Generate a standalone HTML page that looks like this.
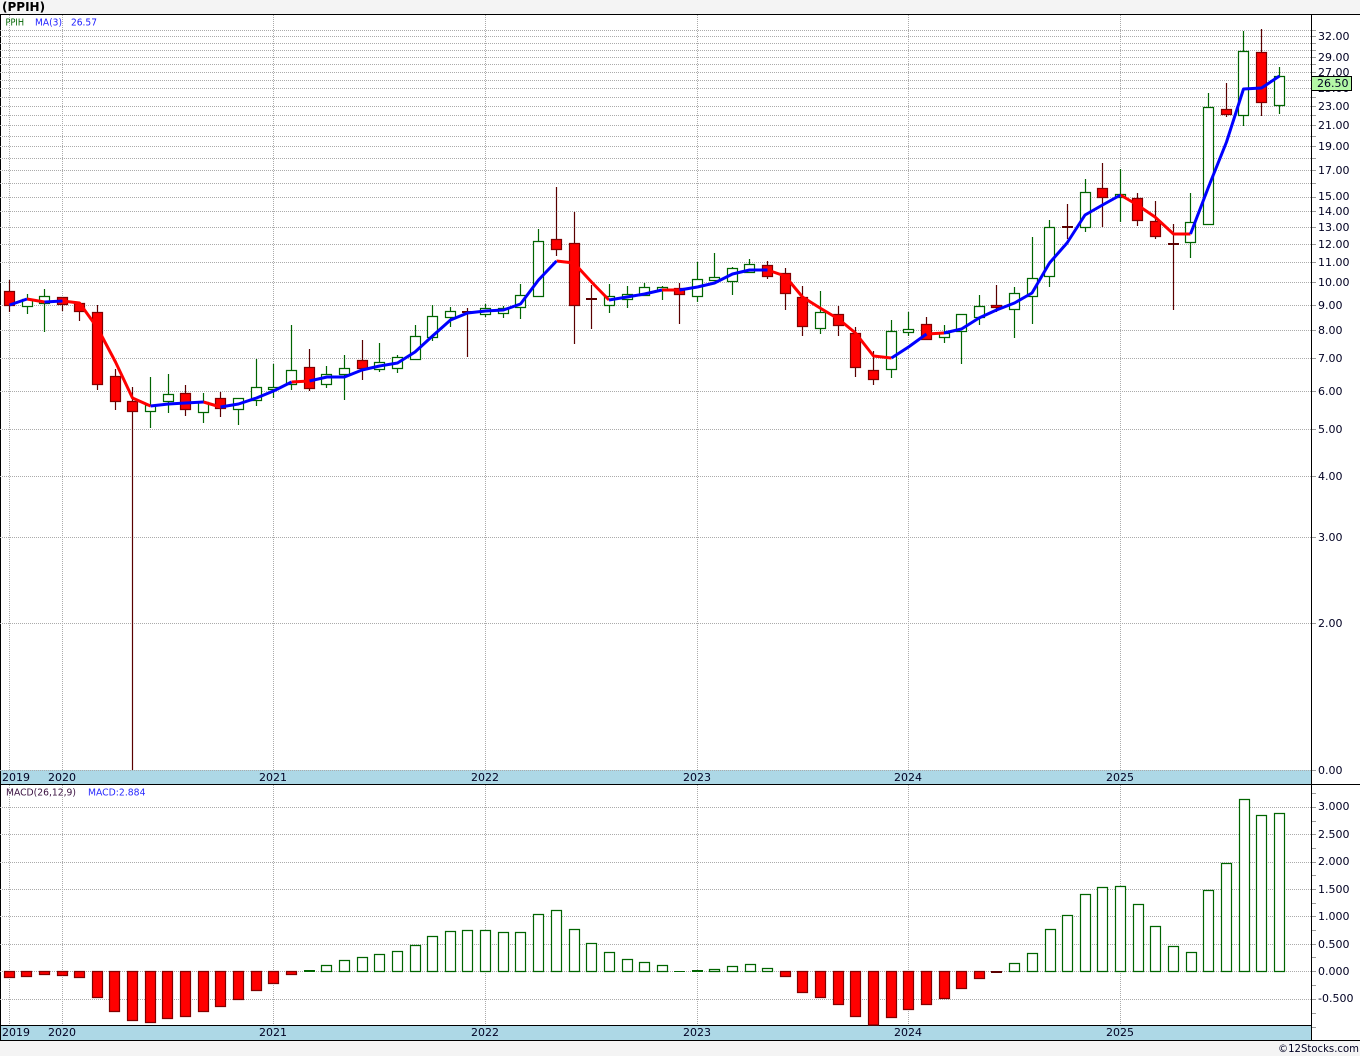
<!DOCTYPE html>
<html><head><meta charset="utf-8"><title>PPIH</title>
<style>
html,body{margin:0;padding:0;background:#f4f4f4;width:1360px;height:1056px;overflow:hidden}
svg{display:block}
text{font-family:"DejaVu Sans","Liberation Sans",sans-serif;font-size:11px;fill:#000022}
.s{font-size:10px}
</style></head><body>
<svg width="1360" height="1056" viewBox="0 0 1360 1056" xmlns="http://www.w3.org/2000/svg">
<rect width="1360" height="1056" fill="#f4f4f4"/>
<rect x="0" y="14" width="1360" height="1026" fill="#fff"/>
<rect x="0" y="770" width="1311" height="14" fill="#add8e6"/>
<rect x="0" y="1025" width="1311" height="15" fill="#add8e6"/>
<path d="M.5 14V1040" stroke="#000" fill="none"/>
<path d="M0 30.5H1316M0 36.5H1316M0 43.5H1316M0 50.5H1316M0 57.5H1316M0 64.5H1316M0 72.5H1316M0 80.5H1316M0 88.5H1316M0 97.5H1316M0 106.5H1316M0 115.5H1316M0 125.5H1316M0 136.5H1316M0 146.5H1316M0 158.5H1316M0 170.5H1316M0 183.5H1316M0 197.5H1316M0 211.5H1316M0 227.5H1316M0 244.5H1316M0 262.5H1316M0 282.5H1316M0 305.5H1316M0 330.5H1316M0 358.5H1316M0 391.5H1316M0 429.5H1316M0 476.5H1316M0 537.5H1316M0 623.5H1316M0 770.5H1316M0 807.5H1316M0 834.5H1316M0 862.5H1316M0 889.5H1316M0 916.5H1316M0 944.5H1316M0 971.5H1316M0 999.5H1316" stroke="#ababab" stroke-dasharray="1 1" fill="none"/>
<path d="M9.5 15V770M62.5 15V770M273.5 15V770M485.5 15V770M697.5 15V770M908.5 15V770M1120.5 15V770M9.5 785V1025M62.5 785V1025M273.5 785V1025M485.5 785V1025M697.5 785V1025M908.5 785V1025M1120.5 785V1025" stroke="#ababab" stroke-dasharray="1 1" fill="none"/>
<path d="M1311 793.5h5M1311 821.5h5M1311 848.5h5M1311 875.5h5M1311 903.5h5M1311 930.5h5M1311 957.5h5M1311 985.5h5M1311 1013.5h5M1311 1027.5h5M1311 807.5h5M1311 834.5h5M1311 862.5h5M1311 889.5h5M1311 916.5h5M1311 944.5h5M1311 971.5h5M1311 999.5h5M1311 30.5h5M1311 36.5h5M1311 43.5h5M1311 50.5h5M1311 57.5h5M1311 64.5h5M1311 72.5h5M1311 80.5h5M1311 88.5h5M1311 97.5h5M1311 106.5h5M1311 115.5h5M1311 125.5h5M1311 136.5h5M1311 146.5h5M1311 158.5h5M1311 170.5h5M1311 183.5h5M1311 197.5h5M1311 211.5h5M1311 227.5h5M1311 244.5h5M1311 262.5h5M1311 282.5h5M1311 305.5h5M1311 330.5h5M1311 358.5h5M1311 391.5h5M1311 429.5h5M1311 476.5h5M1311 537.5h5M1311 623.5h5M1311 770.5h5" stroke="#9c9c9c" fill="none"/>
<path d="M0 14.5H1360M1311.5 14V1040M0 784.5H1360M0 1025.5H1311M0 1040.5H1360" stroke="#000" fill="none"/>

<!-- wicks -->
<path fill="none" stroke="#006400" stroke-width="1.2" d="M27.5 294V314M44.5 289V332M150.5 377V428M168.5 374V413M203.5 393V423M238.5 398V425M256.5 359V406M273.5 364V398M291.5 325V390M326.5 366V388M344.5 355V400M379.5 343V372M397.5 355V373M415.5 325V360M432.5 305V341M450.5 307V327M485.5 304V317M503.5 306V318M520.5 284V319M538.5 229V297M609.5 284V313M627.5 286V308M644.5 283V296M662.5 286V300M697.5 262V302M714.5 253V281M732.5 267V295M749.5 259V273M820.5 291V334M891.5 320V378M908.5 312V336M944.5 325V343M961.5 314V364M979.5 295V325M1014.5 287V338M1032.5 237V324M1049.5 220V287M1085.5 179V232M1120.5 169V222M1190.5 193V258M1208.5 93V225M1243.5 31V126M1279.5 67V114"/>
<path fill="none" stroke="#5a0000" stroke-width="1.2" d="M9.5 280V312M62.5 297V311M79.5 302V321M97.5 305V390M115.5 369V410M132.5 387V770M185.5 385V416M220.5 392V417M309.5 349V391M362.5 340V380M467.5 308V357M556.5 187V256M574.5 212V344M591.5 285V329M679.5 283V324M767.5 261V279M785.5 268V310M802.5 286V336M838.5 306V336M855.5 327V377M873.5 351V385M926.5 317V340M996.5 285V312M1067.5 204V239M1102.5 163V227M1137.5 193V226M1155.5 201V239M1173.5 224V310M1226.5 83V117M1261.5 29V116"/>

<!-- green bodies -->
<path fill="#fff" stroke="#006400" stroke-width="1.2" d="M22.5 299.5h10V306.5h-10zM39.5 296.5h10V303.5h-10zM145.5 405.5h10V411.5h-10zM163.5 394.5h10V401.5h-10zM198.5 402.5h10V412.5h-10zM233.5 398.5h10V409.5h-10zM251.5 387.5h10V400.5h-10zM268.5 387.5h10V389.5h-10zM286.5 370.5h10V384.5h-10zM321.5 374.5h10V384.5h-10zM339.5 368.5h10V374.5h-10zM374.5 362.5h10V369.5h-10zM392.5 357.5h10V368.5h-10zM410.5 336.5h10V359.5h-10zM427.5 316.5h10V337.5h-10zM445.5 311.5h10V317.5h-10zM480.5 308.5h10V314.5h-10zM498.5 308.5h10V313.5h-10zM515.5 295.5h10V307.5h-10zM533.5 241.5h10V296.5h-10zM604.5 296.5h10V305.5h-10zM622.5 294.5h10V299.5h-10zM639.5 287.5h10V295.5h-10zM657.5 287.5h10V290.5h-10zM692.5 279.5h10V296.5h-10zM709.5 277.5h10V280.5h-10zM727.5 268.5h10V281.5h-10zM744.5 264.5h10V272.5h-10zM815.5 312.5h10V328.5h-10zM886.5 331.5h10V369.5h-10zM903.5 329.5h10V332.5h-10zM939.5 333.5h10V337.5h-10zM956.5 314.5h10V331.5h-10zM974.5 306.5h10V317.5h-10zM1009.5 293.5h10V309.5h-10zM1027.5 278.5h10V296.5h-10zM1044.5 227.5h10V276.5h-10zM1080.5 192.5h10V227.5h-10zM1115.5 194.5h10V197.5h-10zM1185.5 222.5h10V242.5h-10zM1203.5 107.5h10V224.5h-10zM1238.5 51.5h10V115.5h-10zM1274.5 76.5h10V105.5h-10z"/>
<!-- red bodies -->
<path fill="#f00" stroke="#800000" stroke-width="1.2" d="M4.5 291.5h10V305.5h-10zM57.5 297.5h10V304.5h-10zM74.5 303.5h10V311.5h-10zM92.5 312.5h10V384.5h-10zM110.5 376.5h10V401.5h-10zM127.5 401.5h10V411.5h-10zM180.5 393.5h10V409.5h-10zM215.5 398.5h10V408.5h-10zM304.5 367.5h10V388.5h-10zM357.5 360.5h10V368.5h-10zM551.5 239.5h10V249.5h-10zM569.5 243.5h10V305.5h-10zM674.5 288.5h10V294.5h-10zM762.5 265.5h10V276.5h-10zM780.5 273.5h10V293.5h-10zM797.5 297.5h10V326.5h-10zM833.5 314.5h10V325.5h-10zM850.5 333.5h10V367.5h-10zM868.5 370.5h10V379.5h-10zM921.5 324.5h10V339.5h-10zM991.5 305.5h10V307.5h-10zM1097.5 188.5h10V197.5h-10zM1132.5 198.5h10V220.5h-10zM1150.5 221.5h10V236.5h-10zM1221.5 109.5h10V114.5h-10zM1256.5 52.5h10V102.5h-10z"/>
<!-- doji -->
<path fill="none" stroke="#5a0000" stroke-width="2" d="M462 312h11M586 299h11M1062 227h11M1168 244h11"/>

<!-- MA line -->
<g fill="none" stroke-width="3" stroke-linejoin="round" stroke-linecap="butt">
<path stroke="#ff0000" d="M27 299L44.5 302M62.5 301L79.5 303L97.5 328L115.5 362L132.5 398L150.5 406M203.5 402L220.5 407M291.5 382L309.5 381M556.5 261L574 263L591.5 282L609 300M662 290L679.5 290M767.5 270L785 276L802.5 297L820 308L838.5 319L855.5 333L873.5 356L891.5 358M926.5 334L944 333M1120.5 195L1137.5 205L1155 217L1173.5 234L1190.5 234"/>
<path stroke="#0000ff" d="M9.5 305L27 299M44.5 302L62.5 301M150.5 406L168.5 404L185.5 403L203.5 402M220.5 407L238.5 404L256.5 398L273.5 391L291.5 382M309.5 381L327 377L344.5 377L362 370L379.5 366L397.5 363L415 352L432.5 336L450.5 320L467.5 313L485.5 311L503.5 310L520.5 304L538.5 280L556.5 261M609 300L627 297L644.5 294L662 290M679.5 290L697.5 287L714.5 283L732.5 274L749.5 270L767.5 270M891.5 358L908.5 347L926.5 334M944 333L961.5 329L979 318L996.5 310L1014.5 303L1032 293L1049.5 263L1067 243L1085 215L1102.5 205L1120.5 195M1190.5 234L1208.5 187L1226.5 142L1243.5 89L1261.5 88L1279.5 76"/>
</g>

<!-- MACD green -->
<path fill="#fff" stroke="#006400" stroke-width="1.2" d="M321.5 965.5h10V971.5h-10zM339.5 960.5h10V971.5h-10zM357.5 957.5h10V971.5h-10zM374.5 954.5h10V971.5h-10zM392.5 951.5h10V971.5h-10zM410.5 945.5h10V971.5h-10zM427.5 936.5h10V971.5h-10zM445.5 931.5h10V971.5h-10zM462.5 930.5h10V971.5h-10zM480.5 930.5h10V971.5h-10zM498.5 932.5h10V971.5h-10zM515.5 932.5h10V971.5h-10zM533.5 914.5h10V971.5h-10zM551.5 910.5h10V971.5h-10zM569.5 929.5h10V971.5h-10zM586.5 943.5h10V971.5h-10zM604.5 952.5h10V971.5h-10zM622.5 959.5h10V971.5h-10zM639.5 962.5h10V971.5h-10zM657.5 965.5h10V971.5h-10zM709.5 969.5h10V971.5h-10zM727.5 966.5h10V971.5h-10zM745.5 964.5h10V971.5h-10zM762.5 968.5h10V971.5h-10zM1009.5 963.5h10V971.5h-10zM1027.5 953.5h10V971.5h-10zM1045.5 929.5h10V971.5h-10zM1062.5 915.5h10V971.5h-10zM1080.5 894.5h10V971.5h-10zM1097.5 887.5h10V971.5h-10zM1115.5 886.5h10V971.5h-10zM1133.5 904.5h10V971.5h-10zM1150.5 926.5h10V971.5h-10zM1168.5 946.5h10V971.5h-10zM1186.5 952.5h10V971.5h-10zM1203.5 890.5h10V971.5h-10zM1221.5 863.5h10V971.5h-10zM1239.5 799.5h10V971.5h-10zM1256.5 815.5h10V971.5h-10zM1274.5 813.5h10V971.5h-10z"/>
<path fill="none" stroke="#006400" stroke-width="2" d="M304 971h11M692 971h11"/>
<path fill="none" stroke="#006400" d="M674 971.5h11"/>
<!-- MACD red -->
<path fill="#f00" stroke="#800000" stroke-width="1.2" d="M4.5 971.5h10V977.5h-10zM21.5 971.5h10V976.5h-10zM39.5 971.5h10V974.5h-10zM57.5 971.5h10V975.5h-10zM74.5 971.5h10V977.5h-10zM92.5 971.5h10V997.5h-10zM109.5 971.5h10V1011.5h-10zM127.5 971.5h10V1020.5h-10zM145.5 971.5h10V1022.5h-10zM162.5 971.5h10V1018.5h-10zM180.5 971.5h10V1016.5h-10zM198.5 971.5h10V1011.5h-10zM215.5 971.5h10V1006.5h-10zM233.5 971.5h10V999.5h-10zM251.5 971.5h10V990.5h-10zM268.5 971.5h10V983.5h-10zM286.5 971.5h10V974.5h-10zM780.5 971.5h10V976.5h-10zM797.5 971.5h10V992.5h-10zM815.5 971.5h10V997.5h-10zM833.5 971.5h10V1004.5h-10zM850.5 971.5h10V1016.5h-10zM868.5 971.5h10V1025h-10zM886.5 971.5h10V1017.5h-10zM903.5 971.5h10V1009.5h-10zM921.5 971.5h10V1004.5h-10zM939.5 971.5h10V998.5h-10zM956.5 971.5h10V988.5h-10zM974.5 971.5h10V978.5h-10z"/>
<path fill="none" stroke="#5a0000" stroke-width="2" d="M991 972h11"/>

<!-- text -->
<text x="2" y="11" style="font-size:12px;font-weight:bold;fill:#000">(PPIH)</text>
<text class="s" x="5.5" y="25.5" style="fill:#006400" textLength="18.5" lengthAdjust="spacingAndGlyphs">PPIH</text>
<text class="s" x="35" y="25.5" style="fill:#2222ff" textLength="27" lengthAdjust="spacingAndGlyphs">MA(3)</text>
<text class="s" x="71" y="25.5" style="fill:#1a1aff" textLength="26" lengthAdjust="spacingAndGlyphs">26.57</text>
<text class="s" x="6" y="795.5" style="fill:#3a1040" textLength="70" lengthAdjust="spacingAndGlyphs">MACD(26,12,9)</text>
<text class="s" x="88" y="795.5" style="fill:#2a2aff" textLength="57.5" lengthAdjust="spacingAndGlyphs">MACD:2.884</text>

<g>
<text x="1318" y="40">32.00</text>
<text x="1318" y="61">29.00</text>
<text x="1318" y="76">27.00</text>
<text x="1318" y="92">25.00</text>
<rect x="1311.5" y="76.5" width="40" height="14" fill="#b4f7a6" stroke="#000"/>
<text x="1317" y="87">26.50</text>
<text x="1318" y="110">23.00</text>
<text x="1318" y="129">21.00</text>
<text x="1318" y="150">19.00</text>
<text x="1318" y="174">17.00</text>
<text x="1318" y="200">15.00</text>
<text x="1318" y="215">14.00</text>
<text x="1318" y="231">13.00</text>
<text x="1318" y="248">12.00</text>
<text x="1318" y="266">11.00</text>
<text x="1318" y="286">10.00</text>
<text x="1318" y="309">9.00</text>
<text x="1318" y="334">8.00</text>
<text x="1318" y="362">7.00</text>
<text x="1318" y="395">6.00</text>
<text x="1318" y="433">5.00</text>
<text x="1318" y="480">4.00</text>
<text x="1318" y="541">3.00</text>
<text x="1318" y="627">2.00</text>
<text x="1318" y="774">0.00</text>
<text x="1318" y="810">3.000</text>
<text x="1318" y="838">2.500</text>
<text x="1318" y="865">2.000</text>
<text x="1318" y="893">1.500</text>
<text x="1318" y="920">1.000</text>
<text x="1318" y="948">0.500</text>
<text x="1318" y="975">0.000</text>
<text x="1318" y="1002">-0.500</text>
</g>

<g>
<text x="2" y="781">2019</text><text x="48" y="781">2020</text><text x="259" y="781">2021</text><text x="471" y="781">2022</text><text x="683" y="781">2023</text><text x="894" y="781">2024</text><text x="1106" y="781">2025</text>
<text x="2" y="1036">2019</text><text x="48" y="1036">2020</text><text x="259" y="1036">2021</text><text x="471" y="1036">2022</text><text x="683" y="1036">2023</text><text x="894" y="1036">2024</text><text x="1106" y="1036">2025</text>
</g>
<text x="1278" y="1052" textLength="81" lengthAdjust="spacingAndGlyphs">©12Stocks.com</text>
</svg>
</body></html>
